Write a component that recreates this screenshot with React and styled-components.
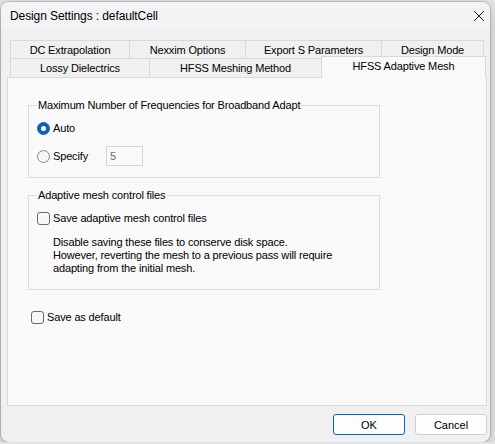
import React from 'react';
import styled, { createGlobalStyle } from 'styled-components';

const GlobalStyle = createGlobalStyle`
  html, body {
    margin: 0;
    padding: 0;
    background: #e2e3e5;
  }
  body {
    font-family: "Liberation Sans", Arial, sans-serif;
    font-size: 11px;
    letter-spacing: -0.15px;
    color: #000;
  }
  * { box-sizing: border-box; }
`;

const Window = styled.div`
  margin: 2px 0 0 1px;
  width: 489px;
  height: 440px;
  background: #f0f0f0;
  border-radius: 8px;
  box-shadow: 0 0 0 1px rgba(0, 0, 0, 0.16), 0 4px 14px rgba(0, 0, 0, 0.18);
  display: flex;
  flex-direction: column;
  overflow: hidden;
`;

const TitleBar = styled.div`
  height: 27px;
  display: flex;
  align-items: center;
  justify-content: space-between;
  padding-left: 9px;
  background: #f2f3f5;
  font-size: 12px;
  letter-spacing: -0.1px;
`;

const CloseBox = styled.div`
  width: 20px;
  height: 20px;
  margin-right: 1px;
  display: flex;
  align-items: center;
  justify-content: center;
`;

const Body = styled.div`
  padding: 11px 0 0 6px;
  display: flex;
  flex-direction: column;
`;

const TabStrip = styled.div`
  margin-left: 3px;
  display: flex;
  flex-direction: column;
`;

const TabRow = styled.div`
  display: flex;
  height: ${p => p.$h}px;
`;

const Tab = styled.div`
  width: ${p => p.$w}px;
  height: 100%;
  margin-right: -1px;
  border: 1px solid #d9d9d9;
  border-bottom: none;
  background: #f0f0f0;
  display: flex;
  align-items: center;
  justify-content: center;
  white-space: nowrap;
`;

const ActiveTab = styled(Tab)`
  position: relative;
  z-index: 1;
  height: 22px;
  margin-top: -2px;
  margin-bottom: -1px;
  background: #f9f9f9;
  align-items: flex-start;
  padding-top: 3px;
`;

const Panel = styled.div`
  width: 480px;
  height: 329px;
  border: 1px solid #d9d9d9;
  background: #f9f9f9;
  padding: 20px 0 0 20px;
`;

const Group = styled.fieldset`
  width: 352px;
  margin: ${p => p.$top || 0}px 0 0 0;
  padding: 8px 8px ${p => p.$bottom}px 8px;
  border: 1px solid #dcdcdc;
  min-width: 0;
`;

const Legend = styled.legend`
  padding: 0 1px;
  line-height: 14px;
`;

const OptionRow = styled.div`
  display: flex;
  align-items: center;
  height: ${p => p.$h || 16}px;
  margin-top: ${p => p.$top || 0}px;
  margin-left: ${p => p.$left || 0}px;
`;

const Radio = styled.span`
  width: 13px;
  height: 13px;
  flex: none;
  border-radius: 50%;
  position: relative;
  background: ${p => (p.$on ? '#0f62b5' : '#f6f6f6')};
  border: 1px solid ${p => (p.$on ? '#0f62b5' : '#858585')};
  &::after {
    content: '';
    display: ${p => (p.$on ? 'block' : 'none')};
    position: absolute;
    left: 3px;
    top: 3px;
    width: 5px;
    height: 5px;
    border-radius: 50%;
    background: #fff;
  }
`;

const Check = styled.span`
  width: 13px;
  height: 13px;
  flex: none;
  border-radius: 3px;
  border: 1px solid #6a6a6a;
  background: #f8f8f8;
`;

const OptionLabel = styled.span`
  margin-left: 3px;
  width: ${p => (p.$w ? `${p.$w}px` : 'auto')};
  white-space: nowrap;
`;

const NumberBox = styled.input`
  width: 37px;
  height: 20px;
  border: 1px solid #d6d6d6;
  border-radius: 0;
  background: #f9f9f9;
  color: #6d6d6d;
  font: inherit;
  padding: 0 0 0 3px;
  outline: none;
`;

const Note = styled.p`
  margin: 10px 0 0 16px;
  line-height: 13px;
`;

const ButtonRow = styled.div`
  width: 480px;
  margin-top: 8px;
  display: flex;
  justify-content: flex-end;
  gap: 10px;
`;

const Button = styled.button`
  width: 72px;
  height: 21px;
  padding: 0;
  font: inherit;
  color: #000;
  background: #fdfdfd;
  border: 1px solid ${p => (p.$primary ? '#0067c0' : '#d0d0d0')};
  border-radius: 3px;
`;

const topTabs = [
  { label: 'DC Extrapolation', w: 120 },
  { label: 'Nexxim Options', w: 117 },
  { label: 'Export S Parameters', w: 137 },
  { label: 'Design Mode', w: 103 },
];

const bottomTabs = [
  { label: 'Lossy Dielectrics', w: 140 },
  { label: 'HFSS Meshing Method', w: 173 },
];

const CloseIcon = () => (
  <svg width="12" height="12" viewBox="0 0 12 12">
    <path d="M1 1 L11 11 M11 1 L1 11" stroke="#1b1b1b" strokeWidth="1" fill="none" />
  </svg>
);

const App = () => (
  <>
    <GlobalStyle />
    <Window>
      <TitleBar>
        <span>Design Settings : defaultCell</span>
        <CloseBox>
          <CloseIcon />
        </CloseBox>
      </TitleBar>
      <Body>
        <TabStrip>
          <TabRow $h={18}>
            {topTabs.map(t => (
              <Tab key={t.label} $w={t.w}>{t.label}</Tab>
            ))}
          </TabRow>
          <TabRow $h={19}>
            {bottomTabs.map(t => (
              <Tab key={t.label} $w={t.w}>{t.label}</Tab>
            ))}
            <ActiveTab $w={165}>HFSS Adaptive Mesh</ActiveTab>
          </TabRow>
        </TabStrip>

        <Panel>
          <Group $bottom={11}>
            <Legend>Maximum Number of Frequencies for Broadband Adapt</Legend>
            <OptionRow>
              <Radio $on />
              <OptionLabel>Auto</OptionLabel>
            </OptionRow>
            <OptionRow $h={20} $top={10}>
              <Radio />
              <OptionLabel $w={53}>Specify</OptionLabel>
              <NumberBox value="5" disabled readOnly />
            </OptionRow>
          </Group>

          <Group $top={10} $bottom={14}>
            <Legend>Adaptive mesh control files</Legend>
            <OptionRow>
              <Check />
              <OptionLabel>Save adaptive mesh control files</OptionLabel>
            </OptionRow>
            <Note>
              Disable saving these files to conserve disk space.
              <br />
              However, reverting the mesh to a previous pass will require
              <br />
              adapting from the initial mesh.
            </Note>
          </Group>

          <OptionRow $top={19} $left={3}>
            <Check />
            <OptionLabel>Save as default</OptionLabel>
          </OptionRow>
        </Panel>

        <ButtonRow>
          <Button $primary>OK</Button>
          <Button>Cancel</Button>
        </ButtonRow>
      </Body>
    </Window>
  </>
);

export default App;
